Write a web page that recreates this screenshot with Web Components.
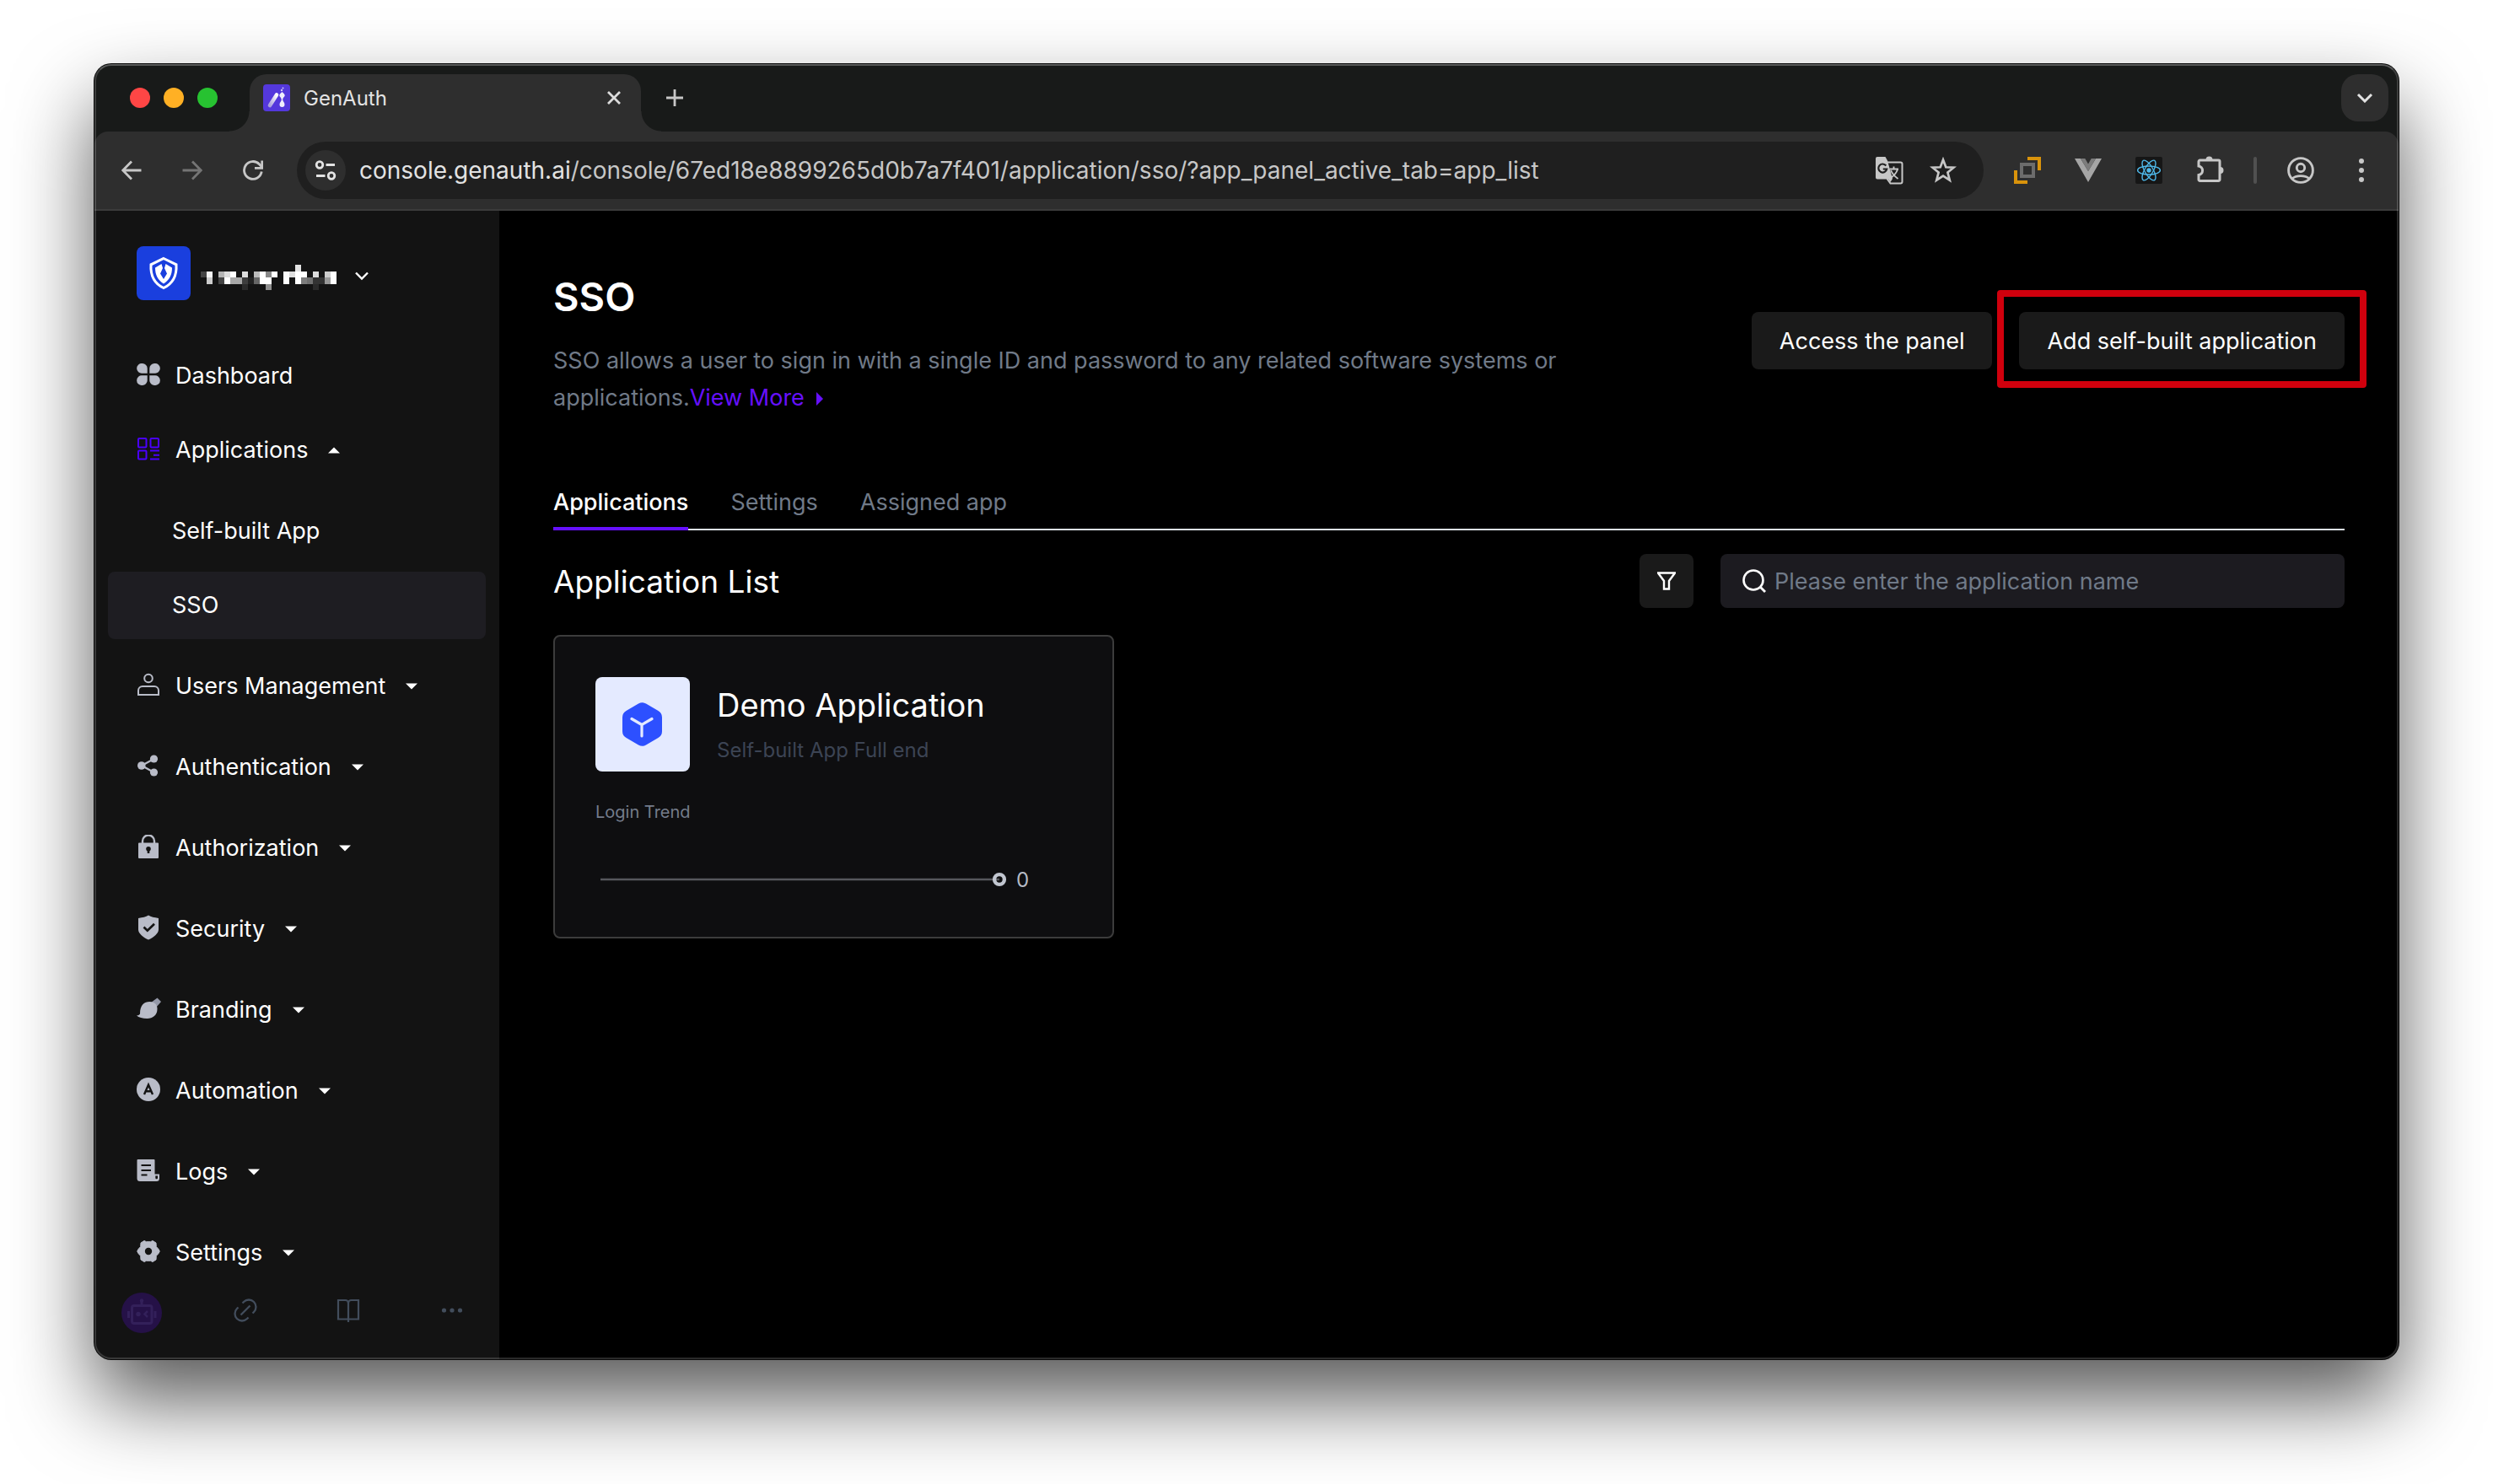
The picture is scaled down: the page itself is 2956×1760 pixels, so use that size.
<!DOCTYPE html>
<html lang="en">
<head>
<meta charset="utf-8">
<title>GenAuth</title>
<style>
html, body { height: 100%; }
body { margin: 0; padding: 76px 112px 148px; box-sizing: border-box; background: #fff; font-family: Inter, "Liberation Sans", sans-serif; font-size: 27px; overflow: hidden; }
</style>
</head>
<body>
<browser-window>
  <tab-strip slot="tabs">GenAuth</tab-strip>
  <address-bar slot="toolbar" host="console.genauth.ai" path="/console/67ed18e8899265d0b7a7f401/application/sso/?app_panel_active_tab=app_list"></address-bar>
  <app-sidebar></app-sidebar>
  <sso-page></sso-page>
</browser-window>

<script>
const make = (name, html) => {
  const tpl = document.createElement('template');
  tpl.innerHTML = html;
  return class extends HTMLElement {
    constructor() {
      super();
      this.attachShadow({ mode: 'open' }).append(tpl.content.cloneNode(true));
    }
  };
};

/* Icons: [width, height, markup] */
const ICONS = {
  back: [24, 24, '<path d="M23.500 12H2M12 1.500 1.700 12 12 22.500" fill="none" stroke="#c7c7c7" stroke-width="2.800"/>'],
  forward: [24, 24, '<path d="M.5 12H22M12 1.500 22.300 12 12 22.500" fill="none" stroke="#757575" stroke-width="2.800"/>'],
  reload: [24, 24, '<path d="M22.200 13.500A10.400 10.400 0 1 1 19.500 4.800L22.500 8" fill="none" stroke="#c7c7c7" stroke-width="2.800"/><path d="M22.700.5V9.300H14" fill="none" stroke="#c7c7c7" stroke-width="2.800"/>'],
  tune: [26, 24, '<g fill="none" stroke="#e3e3e3" stroke-width="2.800"><circle cx="6" cy="5.500" r="3.800"/><path d="M13.500 5.500H24M2 18.500H12.500"/><circle cx="20" cy="18.500" r="3.800"/></g>'],
  close: [16, 16, '<path d="M1 1 15 15M15 1 1 15" stroke="#dcdcdc" stroke-width="2.800"/>'],
  plus: [20, 20, '<path d="M10 0V20M0 10H20" stroke="#c7c7c7" stroke-width="2.800"/>'],
  tabdown: [20, 12, '<path d="M2 2 10 10 18 2" fill="none" stroke="#e3e3e3" stroke-width="3"/>'],
  favicon: [32, 32, '<defs><linearGradient id="fg" x1="1" y1="0" x2="0" y2="1"><stop offset="0" stop-color="#fff"/><stop offset="1" stop-color="#aaa0dc"/></linearGradient></defs><rect width="32" height="32" rx="4" fill="#5438dc"/><path d="M16 12.500 8 25" stroke="url(#fg)" stroke-width="4.600" stroke-linecap="round"/><path d="M22.500 9c2 2 3.200 2.600 3.200 4.300 0 1.600-2.200 2-2.500 5 .3 2.600 2.300 3 2.300 5.600a3 3 0 0 1-6 0c0-2.600 2-3 2.300-5.600-.3-3-2.500-3.400-2.500-5C19.300 11.600 20.500 11 22.500 9z" fill="#f1effc"/><circle cx="22" cy="7" r="1.200" fill="#cfc8f5"/><circle cx="23.500" cy="4.500" r="1" fill="#cfc8f5"/>'],
  translate: [34, 34, '<path d="M15 7.500H30.500A2 2 0 0 1 32.500 9.500V30.500A2 2 0 0 1 30.500 32.500H18.500L14.500 27" fill="none" stroke="#c7c7c7" stroke-width="2"/><path d="M17.500 15.500H28M22.500 12.500V15.500M27 16C25.500 20.500 22 24 18 26.500M19 17C20.500 20.500 24 24.500 27.500 27" stroke="#c7c7c7" stroke-width="1.900" fill="none"/><path d="M3 1H12.500L15 5.500 21 27 18.500 31 16 27.500H3A2 2 0 0 1 1 25.500V3A2 2 0 0 1 3 1z" fill="#c7c7c7"/><path d="M13.300 11.500A5 5 0 1 0 14.200 15.500H9.800" fill="none" stroke="#1f1f1f" stroke-width="2.200"/>'],
  star: [32, 32, '<path d="M16 3.500 19.300 12.300 28.500 12.700 21.400 18.500 23.800 27.600 16 22.500 8.200 27.600 10.600 18.500 3.500 12.700 12.700 12.300z" fill="none" stroke="#c7c7c7" stroke-width="2.700"/>'],
  layers: [32, 32, '<path d="M16 2H30V16M16 30H2V16" fill="none" stroke="#d9930b" stroke-width="4"/><rect x="9" y="9" width="14" height="14" fill="none" stroke="#6c6c6c" stroke-width="4"/>'],
  vue: [32, 32, '<path d="M0 2H7L16 17 25 2H32L16 30z" fill="#a5a5a5"/><path d="M7 2H12.300L16 8.500 19.700 2H25L16 17z" fill="#7c7c7c"/>'],
  react: [32, 32, '<rect width="32" height="32" rx="2" fill="#161616"/><g fill="none" stroke="#4fb9ea" stroke-width="1.400"><ellipse cx="16" cy="16" rx="13.400" ry="5"/><ellipse cx="16" cy="16" rx="13.400" ry="5" transform="rotate(60 16 16)"/><ellipse cx="16" cy="16" rx="13.400" ry="5" transform="rotate(120 16 16)"/></g><circle cx="16" cy="16" r="2.700" fill="#4fb9ea"/>'],
  puzzle: [34, 34, '<path d="M5.500 5H27.500A1.500 1.500 0 0 1 29 6.500V28A1.500 1.500 0 0 1 27.500 29.500H5.500A1.500 1.500 0 0 1 4 28V22.500A5.300 5.300 0 0 0 4 12V6.500A1.500 1.500 0 0 1 5.500 5z" fill="none" stroke="#c7c7c7" stroke-width="3"/><path d="M12.500 4.500A4 4 0 0 1 20.500 4.500zM29.500 13A4 4 0 0 1 29.500 21z" fill="#c7c7c7"/>'],
  profile: [32, 32, '<g fill="none" stroke="#c7c7c7" stroke-width="2.900"><circle cx="16" cy="16" r="14.400"/><circle cx="16" cy="13" r="4.700"/><path d="M6 26C10 21.500 22 21.500 26 26"/></g>'],
  kebab: [32, 32, '<g fill="#c7c7c7"><circle cx="16" cy="5" r="3"/><circle cx="16" cy="16" r="3"/><circle cx="16" cy="27" r="3"/></g>'],
  workspace: [64, 64, '<rect width="64" height="64" rx="8" fill="#1a3fde"/><path d="M32 14.500 47 21.800C47.800 35 43.500 44 32 49.500 20.500 44 16.200 35 17 21.800z" fill="none" stroke="#fff" stroke-width="3"/><path d="M29.500 21 22 25.500C22 34 25 40 32 44.500 39 40 42 34 42 25.500L34.500 21 33 26 36 32.500 32 39 28 32.500 31 26z" fill="#fff"/>'],
  wsdown: [18, 12, '<path d="M2 2.500 9 9.500 16 2.500" fill="none" stroke="#fff" stroke-width="2.400"/>'],
  dashboard: [28, 28, '<g fill="#b9bcc8"><path d="M6.800 1A5.900 5.900 0 1 0 6.800 12.700H12.700V6.800A5.900 5.900 0 0 0 6.800 1z"/><path d="M21.200 1A5.900 5.900 0 1 1 21.200 12.700H15.300V6.800A5.900 5.900 0 0 1 21.200 1z"/><path d="M6.800 27A5.900 5.900 0 1 1 6.800 15.300H12.700V21.200A5.900 5.900 0 0 1 6.800 27z"/><path d="M21.200 27A5.900 5.900 0 1 0 21.200 15.300H15.300V21.200A5.900 5.900 0 0 0 21.200 27z"/></g>'],
  apps: [28, 28, '<g fill="none" stroke="#4a00ff" stroke-width="2"><rect x="2" y="2" width="9.500" height="10.500" rx="1"/><rect x="16.500" y="2" width="9.500" height="10.500" rx="1"/><rect x="2" y="16.500" width="9.500" height="10" rx="1"/><path d="M16 16.500H27M20 21.700H27M16 26.500H27"/></g>'],
  user: [28, 28, '<g fill="none" stroke="#b9bcc8" stroke-width="2"><circle cx="14" cy="6.500" r="4.800"/><path d="M2 26V21A5 5 0 0 1 7 16H21A5 5 0 0 1 26 21V26z"/></g>'],
  share: [28, 28, '<path d="M20.500 6 6 14 20.500 22" fill="none" stroke="#b9bcc8" stroke-width="2.200"/><g fill="#b9bcc8"><circle cx="20.500" cy="6" r="4.600"/><circle cx="5.800" cy="14" r="4.800"/><circle cx="20.500" cy="22" r="4.600"/></g>'],
  lock: [28, 28, '<path d="M7 11V7.500A7 7 0 0 1 21 7.500V11" fill="none" stroke="#b9bcc8" stroke-width="2.400"/><path fill="#b9bcc8" d="M3 9.500H25A1 1 0 0 1 26 10.500V27A1 1 0 0 1 25 28H3A1 1 0 0 1 2 27V10.500A1 1 0 0 1 3 9.500z"/><circle cx="14" cy="16.800" r="2.800" fill="#131313"/><path d="M14 17V22" stroke="#131313" stroke-width="2.600"/>'],
  shield: [28, 30, '<path d="M2 4C7 3 11 2.500 14 .5 17 2.500 21 3 26 4V17.500C26 22 20 27 14 29.500 8 27 2 22 2 17.500z" fill="#b9bcc8"/><path d="M8.500 14.500 12.800 18.700 21 10.800" fill="none" stroke="#131313" stroke-width="2.700"/>'],
  brush: [30, 28, '<path d="M24.500 1.500 29 6 23 13 17 7z" fill="#9498a8"/><path d="M4 20.500C4 10 9 6 15.500 6 21.500 6 24.500 10 24.500 14.500 24.500 22 19 26 12.500 26 7 26 2.500 24.500 0 22.500 2 22.500 3 21.500 4 20.500z" fill="#b9bcc8"/>'],
  auto: [28, 28, '<circle cx="14" cy="14" r="14" fill="#b9bcc8"/><path d="M9 20 14 8.500 19 20M10.500 16.200H17.500" fill="none" stroke="#131313" stroke-width="2.400"/>'],
  logs: [28, 28, '<path d="M1.500 1H20.500A1 1 0 0 1 21.500 2V18.500H27V23.500A3.500 3.500 0 0 1 23.500 27H4A3.500 3.500 0 0 1 .5 23.500V2A1 1 0 0 1 1.500 1z" fill="#b9bcc8"/><path d="M5.500 8H17M5.500 14H17M5.500 19.500H12.500" stroke="#131313" stroke-width="2.200"/><path d="M22.300 20.500H25V23A1.350 1.350 0 0 1 22.300 23z" fill="#131313"/>'],
  gear: [28, 28, '<path d="M9 1.500 11.500 2.700H16.500L19 1.500 23 4 23.300 8.500 26 11.500 27.300 14 26 16.500 23.300 19.500 23 24 19 26.500 16.500 25.300H11.500L9 26.500 5 24 4.700 19.500 2 16.500.7 14 2 11.500 4.700 8.500 5 4z" fill="#b9bcc8" stroke="#b9bcc8" stroke-width="1" stroke-linejoin="round"/><circle cx="14" cy="14" r="4.200" fill="#131313"/>'],
  caretdown: [14, 8, '<path d="M0 .5H14L7 7.500z" fill="#fff"/>'],
  caretup: [14, 8, '<path d="M0 7.500H14L7 .5z" fill="#fff"/>'],
  caretright: [8, 16, '<path d="M0 0 8 8 0 16z" fill="#6610ff"/>'],
  robot: [48, 48, '<circle cx="24" cy="24" r="24" fill="#251147"/><g fill="none" stroke="#33205a" stroke-width="3"><rect x="12.500" y="15.500" width="23.500" height="21" rx="2.500"/><path d="M24 10V15M8.500 22V30M40 22V30"/><path d="M31 22 27.500 25.500 31 29" stroke-width="2.500"/></g><circle cx="24" cy="9.500" r="2.200" fill="#33205a"/><circle cx="20" cy="25.500" r="2.700" fill="#33205a"/>'],
  link: [28, 28, '<g fill="none" stroke="#424d5c" stroke-width="2.300"><path d="M8.500 19.500 19.500 8.500"/><path d="M10.500 5.500 12 4A8.300 8.300 0 0 1 24 16L22.500 17.500"/><path d="M5.500 10.500 4 12A8.300 8.300 0 0 0 16 24L17.500 22.500"/></g>'],
  book: [28, 28, '<path d="M14 28V4.500M2 2H10.500A3.500 3.500 0 0 1 14 5.500 3.500 3.500 0 0 1 17.500 2H26V24.500H2z" fill="none" stroke="#424d5c" stroke-width="2.200"/>'],
  dots: [26, 8, '<g fill="#424d5c"><circle cx="3.500" cy="4" r="2.600"/><circle cx="13" cy="4" r="2.600"/><circle cx="22.500" cy="4" r="2.600"/></g>'],
  filter: [22, 22, '<path d="M1 1.500H21L14 11V20.500H8V11z" fill="none" stroke="#fff" stroke-width="2.400"/>'],
  search: [28, 28, '<circle cx="13" cy="13" r="11.500" fill="none" stroke="#fff" stroke-width="2.600"/><path d="M21 21 27 27" stroke="#fff" stroke-width="2.800"/>'],
  cube: [112, 112, '<rect width="112" height="112" rx="8" fill="#e4eaff"/><path d="M51 31.500a9 9 0 0 1 9 0l14.500 8.500a9 9 0 0 1 4.500 7.800v16.400a9 9 0 0 1-4.500 7.800l-14.500 8.500a9 9 0 0 1-9 0l-14.500-8.500a9 9 0 0 1-4.500-7.800V47.800a9 9 0 0 1 4.500-7.800z" fill="#2d50ff"/><path d="M43 49.500 55 56.500 67 49.500M55 56.500V70" fill="none" stroke="#e4eaff" stroke-width="3.200" stroke-linecap="round" stroke-linejoin="round"/>']
};
class UiIcon extends HTMLElement {
  constructor() { super(); this.attachShadow({ mode: 'open' }); }
  connectedCallback() {
    const [w, h, m] = ICONS[this.getAttribute('name')];
    this.shadowRoot.innerHTML = `<style>:host{display:block;flex:none}svg{display:block}</style><svg width="${w}" height="${h}" viewBox="0 0 ${w} ${h}" aria-hidden="true">${m}</svg>`;
  }
}
customElements.define('ui-icon', UiIcon);

customElements.define('browser-window', make('browser-window', `
<style>
:host { display: flex; flex-direction: column; position: relative; height: 100%; border-radius: 20px; background: #181a19;
  box-shadow: 0 0 0 1px #0a0a0a, 0 48px 96px rgba(0,0,0,.66); }
:host::after { content: ""; position: absolute; inset: 0; border: 2px solid rgba(255,255,255,.16); border-top-color: rgba(255,255,255,.28); border-radius: 20px; pointer-events: none; }
.view { flex: 1; min-height: 0; display: flex; background: #000; border-radius: 0 0 20px 20px; overflow: hidden; }
</style>
<slot name="tabs"></slot><slot name="toolbar"></slot>
<div class="view"><slot></slot></div>`));

customElements.define('tab-strip', make('tab-strip', `
<style>
:host { display: flex; align-items: center; height: 80px; padding: 0 12px 0 42px; font-size: 24px; color: #e3e3e3; }
button { border: 0; padding: 0; background: none; color: inherit; font: inherit; display: flex; align-items: center; justify-content: center; }
.lights { display: flex; gap: 16px; margin-right: 38px; }
.lights button { width: 24px; height: 24px; border-radius: 50%; }
.red { background: #ff4645; } .amber { background: #ffb024; } .green { background: #27c231; }
.tab { position: relative; align-self: flex-end; box-sizing: border-box; display: flex; align-items: center; gap: 16px; width: 464px; height: 68px; padding: 0 24px 12px 16px; border-radius: 20px 20px 0 0; background: #2e2e2e; }
.tab::before, .tab::after { content: ""; position: absolute; bottom: 0; width: 24px; height: 24px; }
.tab::before { right: 100%; background: radial-gradient(circle at 0 0, transparent 23px, #2e2e2e 24px); }
.tab::after { left: 100%; background: radial-gradient(circle at 100% 0, transparent 23px, #2e2e2e 24px); }
.name { flex: 1; }
.add { margin-left: 30px; }
.more { width: 56px; height: 56px; border-radius: 20px; background: #2e2e2e; margin-left: auto; }
</style>
<div class="lights"><button class="red" aria-label="Close window"></button><button class="amber" aria-label="Minimise"></button><button class="green" aria-label="Full screen"></button></div>
<div class="tab"><ui-icon name="favicon"></ui-icon><span class="name"><slot></slot></span><button aria-label="Close tab"><ui-icon name="close"></ui-icon></button></div>
<button class="add" aria-label="New tab"><ui-icon name="plus"></ui-icon></button>
<button class="more" aria-label="Search tabs"><ui-icon name="tabdown"></ui-icon></button>`));

class AddressBar extends make('address-bar', `
<style>
:host { display: flex; align-items: center; box-sizing: border-box; height: 94px; padding: 0 28px 0 32px; background: #2e2e2e; border-bottom: 2px solid #3b3b3b; border-radius: 16px 16px 0 0; font-size: 28px; }
button { border: 0; padding: 0; background: none; display: flex; align-items: center; justify-content: center; }
.nav { display: flex; gap: 48px; margin-right: 40px; }
.url { flex: 1; display: flex; align-items: center; height: 68px; padding: 0 32px 0 10px; border-radius: 34px; background: #1f1f1f; margin-right: 36px; }
.site { width: 48px; height: 48px; border-radius: 50%; background: #2e2e2e; margin-right: 16px; }
.text { flex: 1; color: #c7c7c7; white-space: nowrap; }
.text b { font-weight: 400; color: #e3e3e3; }
.in { display: flex; align-items: center; gap: 31px; }
.ext { display: flex; align-items: center; gap: 40px; }
.ext button { width: 32px; height: 32px; }
.sep { width: 4px; height: 32px; border-radius: 2px; background: #505050; margin: 0 -4px; }
</style>
<div class="nav"><button aria-label="Back"><ui-icon name="back"></ui-icon></button><button aria-label="Forward"><ui-icon name="forward"></ui-icon></button><button aria-label="Reload"><ui-icon name="reload"></ui-icon></button></div>
<div class="url"><button class="site" aria-label="Site information"><ui-icon name="tune"></ui-icon></button><span class="text"><b></b><span class="path"></span></span>
<div class="in"><button aria-label="Translate"><ui-icon name="translate"></ui-icon></button><button aria-label="Bookmark"><ui-icon name="star"></ui-icon></button></div></div>
<div class="ext"><button aria-label="Screens"><ui-icon name="layers"></ui-icon></button><button aria-label="Vue devtools"><ui-icon name="vue"></ui-icon></button><button aria-label="React devtools"><ui-icon name="react"></ui-icon></button><button aria-label="Extensions"><ui-icon name="puzzle"></ui-icon></button><span class="sep"></span><button aria-label="Profile"><ui-icon name="profile"></ui-icon></button><button aria-label="Menu"><ui-icon name="kebab"></ui-icon></button></div>`) {
  connectedCallback() {
    this.shadowRoot.querySelector('b').textContent = this.getAttribute('host');
    this.shadowRoot.querySelector('.path').textContent = this.getAttribute('path');
  }
}
customElements.define('address-bar', AddressBar);

/* Sidebar row; "icon", "caret" (up|down), "sub" and "active" attributes */
class NavItem extends make('nav-item', `
<style>
:host { display: block; flex: none; margin-top: 16px; }
:host([tight]) { margin-top: 8px; }
a { display: flex; align-items: center; box-sizing: border-box; height: 80px; padding-left: 34px; border-radius: 8px; color: #fff; line-height: 28px; text-decoration: none; white-space: nowrap; }
:host([sub]) a { padding-left: 76px; }
:host([active]) a { background: #1e1d22; }
.icon { width: 28px; margin-right: 18px; padding-bottom: 4px; }
.caret { margin-left: 24px; }
</style>
<a href="#"><slot></slot></a>`) {
  connectedCallback() {
    const a = this.shadowRoot.querySelector('a');
    if (this.hasAttribute('icon')) a.insertAdjacentHTML('afterbegin', `<ui-icon class="icon" name="${this.getAttribute('icon')}"></ui-icon>`);
    if (this.hasAttribute('caret')) a.insertAdjacentHTML('beforeend', `<ui-icon class="caret" name="caret${this.getAttribute('caret')}"></ui-icon>`);
  }
}
customElements.define('nav-item', NavItem);

/* Workspace name, obscured as a grid of grey cells: row, column, grey level */
const CELLS = [
  [0,16,227],[1,0,68],[1,1,245],[1,3,180],[1,4,220],[1,5,255],[1,7,221],[1,9,187],[1,10,255],[1,11,136],[1,12,255],[1,14,250],[1,15,221],[1,16,255],[1,17,255],[1,19,221],[1,21,204],[1,22,255],
  [2,1,204],[2,3,68],[2,4,255],[2,5,168],[2,6,168],[2,7,61],[2,8,34],[2,9,102],[2,10,255],[2,11,255],[2,14,255],[2,16,255],[2,17,124],[2,18,111],[2,19,51],[2,20,51],[2,21,153],[2,22,255],
  [3,7,42],[3,11,143],[3,19,42]];
ICONS.mosaic = [162, 30, CELLS.map(([r, c, v]) => `<rect x="${c * 7}" y="${[0, 8, 15, 23][r]}" width="7" height="${[8, 7, 8, 7][r]}" fill="rgb(${v},${v},${v})"/>`).join('')];

customElements.define('app-sidebar', make('app-sidebar', `
<style>
:host { display: flex; flex-direction: column; flex: none; width: 480px; background: #131313; }
button { border: 0; padding: 0; background: none; display: flex; align-items: center; justify-content: center; }
.space { flex: none; justify-content: flex-start; padding: 42px 0 42px 50px; }
.space .name { padding: 10px 20px 0 12px; }
.space .down { padding-top: 6px; }
nav { flex: 1; min-height: 0; overflow: hidden; display: flex; flex-direction: column; padding: 0 16px; }
footer { flex: none; display: flex; align-items: center; justify-content: space-between; box-sizing: border-box; height: 110px; padding: 0 32px; }
footer button { width: 48px; height: 48px; }
footer .small { padding-bottom: 6px; }
</style>
<button class="space" aria-label="Switch workspace"><ui-icon name="workspace"></ui-icon><ui-icon class="name" name="mosaic"></ui-icon><ui-icon class="down" name="wsdown"></ui-icon></button>
<nav>
<nav-item tight icon="dashboard">Dashboard</nav-item>
<nav-item tight icon="apps" caret="up">Applications</nav-item>
<nav-item sub>Self-built App</nav-item>
<nav-item sub tight active>SSO</nav-item>
<nav-item icon="user" caret="down">Users Management</nav-item>
<nav-item icon="share" caret="down">Authentication</nav-item>
<nav-item icon="lock" caret="down">Authorization</nav-item>
<nav-item icon="shield" caret="down">Security</nav-item>
<nav-item icon="brush" caret="down">Branding</nav-item>
<nav-item icon="auto" caret="down">Automation</nav-item>
<nav-item icon="logs" caret="down">Logs</nav-item>
<nav-item icon="gear" caret="down">Settings</nav-item>
</nav>
<footer><button aria-label="Assistant"><ui-icon name="robot"></ui-icon></button><button class="small" aria-label="Links"><ui-icon name="link"></ui-icon></button><button class="small" aria-label="Docs"><ui-icon name="book"></ui-icon></button><button class="small" aria-label="More"><ui-icon name="dots"></ui-icon></button></footer>`));

customElements.define('panel-button', make('panel-button', `
<style>
:host { display: block; position: relative; }
button { display: block; border: 0; height: 68px; padding: 0 33px; border-radius: 8px; background: #1a1a1a; color: #fff; font: inherit; white-space: nowrap; }
:host([marked])::after { content: ""; position: absolute; inset: -26px -26px -22px; border: 8px solid #d0000d; border-radius: 4px; pointer-events: none; }
</style>
<button><slot></slot></button>`));

customElements.define('app-card', make('app-card', `
<style>
:host { display: block; box-sizing: border-box; padding: 48px; border: 2px solid #3c3c3c; border-radius: 8px; background: #0e0e10; }
.top { display: flex; align-items: center; gap: 32px; }
h3 { margin: 0 0 10px; font-size: 38px; font-weight: 400; line-height: 52px; color: #fff; }
.kind { font-size: 24px; line-height: 36px; color: #3c4454; }
.label { margin-top: 32px; font-size: 20px; line-height: 32px; color: #747c8b; }
.trend { display: flex; align-items: center; gap: 9px; height: 40px; margin-top: 44px; padding-left: 6px; font-size: 24px; color: #b5bac5; }
svg { display: block; }
</style>
<div class="top"><ui-icon name="cube"></ui-icon><div><h3><slot></slot></h3><div class="kind"><slot name="kind"></slot></div></div></div>
<div class="label">Login Trend</div>
<div class="trend"><svg width="484" height="20" viewBox="0 0 484 20" role="img" aria-label="Login trend"><path d="M0 10H473" stroke="#56575c" stroke-width="2.600"/><circle cx="473" cy="10" r="5.900" fill="none" stroke="#c1c6d0" stroke-width="4.400"/></svg><slot name="value"></slot></div>`));

customElements.define('sso-page', make('sso-page', `
<style>
:host { display: block; flex: 1; min-width: 0; box-sizing: border-box; padding: 72px 64px 0; background: #000; color: #fff; }
header { display: flex; justify-content: space-between; align-items: center; }
h1 { margin: 0 0 24px; font-size: 47px; line-height: 60px; font-weight: 600; }
p { margin: 0; max-width: 1240px; line-height: 44px; color: #707a88; }
p a { color: #6610ff; text-decoration: none; }
p a ui-icon { display: inline-block; margin-left: 14px; }
.actions { display: flex; gap: 32px; padding-bottom: 8px; }
.tabs { display: flex; gap: 50px; margin-top: 80px; border-bottom: 2px solid #dce0e6; }
.tabs button { margin: 0 0 -2px; padding: 0 0 7px; border: 0; border-bottom: 4px solid transparent; background: none; color: #707a88; font: inherit; line-height: 44px; }
.tabs button[aria-selected=true] { border-color: #6610ff; color: #fff; font-weight: 500; }
.bar { display: flex; align-items: center; gap: 32px; margin: 28px 0 32px; }
h2 { flex: 1; margin: 0; font-size: 37px; font-weight: 400; }
.filter { display: flex; align-items: center; justify-content: center; width: 64px; height: 64px; padding: 0; border: 0; border-radius: 8px; background: #1a1a1a; }
.search { display: flex; align-items: center; gap: 10px; box-sizing: border-box; width: 740px; height: 64px; padding: 0 26px; border-radius: 8px; background: #1c1b20; }
.search input { flex: 1; min-width: 0; border: 0; padding: 0; background: none; color: #fff; font: inherit; outline: 0; }
.search input::placeholder { color: #707a88; opacity: 1; }
.grid { display: grid; grid-template-columns: repeat(3, 1fr); gap: 64px; }
</style>
<header>
<div><h1>SSO</h1><p>SSO allows a user to sign in with a single ID and password to any related software systems or applications.<a href="#">View More<ui-icon name="caretright"></ui-icon></a></p></div>
<div class="actions"><panel-button>Access the panel</panel-button><panel-button marked>Add self-built application</panel-button></div>
</header>
<div class="tabs" role="tablist"><button role="tab" aria-selected="true">Applications</button><button role="tab" aria-selected="false">Settings</button><button role="tab" aria-selected="false">Assigned app</button></div>
<div class="bar"><h2>Application List</h2><button class="filter" aria-label="Filter"><ui-icon name="filter"></ui-icon></button><label class="search"><ui-icon name="search"></ui-icon><input type="text" aria-label="Application name" placeholder="Please enter the application name"></label></div>
<div class="grid"><app-card>Demo Application<span slot="kind">Self-built App Full end</span><span slot="value">0</span></app-card></div>`));
</script>
</body>
</html>
